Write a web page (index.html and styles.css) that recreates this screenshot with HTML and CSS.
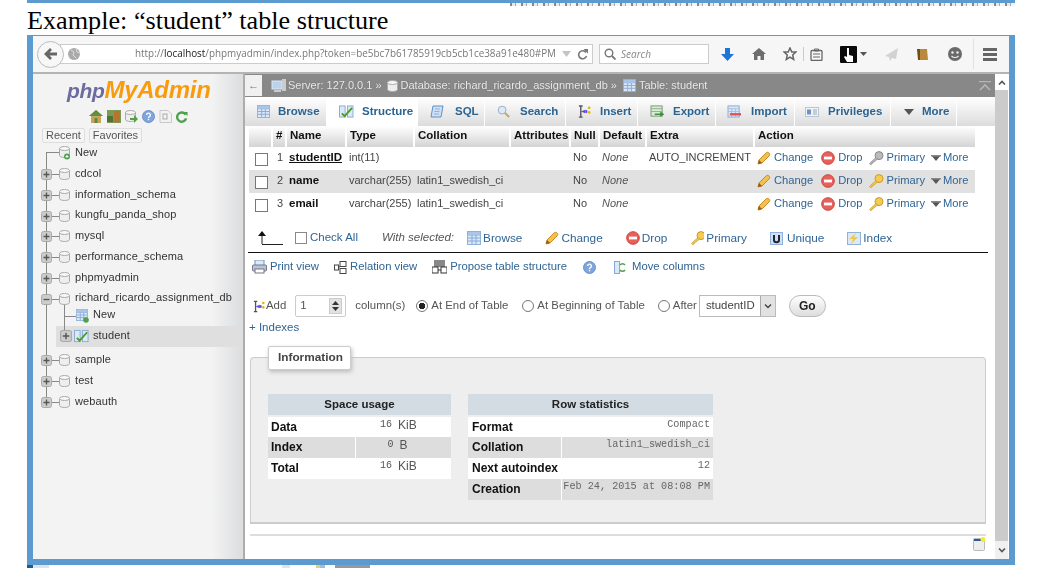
FILE: index.html
```html
<!DOCTYPE html>
<html lang="en">
<head>
<meta charset="utf-8">
<title>Example: student table structure</title>
<link rel="stylesheet" href="styles.css">
</head>
<body>
<svg class="defs" width="0" height="0" aria-hidden="true">
  <defs>
    <symbol id="pencil" viewBox="0 0 14 14"><path d="M1 13l1-4 7-7c1-1 2-1 3 0s1 2 0 3l-7 7z" fill="#f3c14d" stroke="#c98a22"/><path d="M1 13l1-4 3 3z" fill="#8a5a20"/></symbol>
    <symbol id="drop" viewBox="0 0 14 14"><circle cx="7" cy="7" r="6.3" fill="#e8605a" stroke="#c9443e"/><rect x="3" y="5.6" width="8" height="2.8" fill="#fff"/></symbol>
    <symbol id="key" viewBox="0 0 16 14"><circle cx="11" cy="4.6" r="4" fill="#f5cc52" stroke="#c99a2a"/><path d="M8 6.500L1.500 12.500l1 1 1.500-.5 .5-1.500 1.500-.5L9.500 8z" fill="#f5cc52" stroke="#c99a2a" stroke-width=".8"/></symbol>
    <symbol id="keyg" viewBox="0 0 16 14"><circle cx="11" cy="4.600" r="4" fill="#bbb" stroke="#888"/><path d="M8 6.500L1.500 12.500l1 1 1.500-.5 .5-1.500 1.500-.5L9.500 8z" fill="#bbb" stroke="#888" stroke-width=".8"/></symbol>
    <symbol id="caret" viewBox="0 0 12 8"><path d="M1 1h10L6 7z" fill="#555"/><path d="M1 1h10v1.500H1z" fill="#888"/></symbol>
    <symbol id="grid" viewBox="0 0 14 14"><rect x=".5" y=".5" width="13" height="13" fill="#dbe8f8" stroke="#8fb2dc"/><path d="M1 4h12M1 7h12M1 10h12M5 4v9M9 4v9" stroke="#86a9d6"/><rect x="1" y="1" width="12" height="3" fill="#a9c5ea"/></symbol>
    <symbol id="struct" viewBox="0 0 16 14"><rect x=".5" y="1" width="6" height="12" fill="#dbe8f8" stroke="#86a9d6"/><rect x="9" y="1" width="6" height="12" fill="#dbe8f8" stroke="#86a9d6"/><path d="M3 9l3 3 8-9" fill="none" stroke="#4c9a2a" stroke-width="2"/></symbol>
    <symbol id="sql" viewBox="0 0 14 14"><path d="M3 1h10l-2 11H1z" fill="#cfe0f5" stroke="#5f8fc8"/><path d="M5 4h5M4.500 6.500h5M4 9h5" stroke="#8fb2dc"/></symbol>
    <symbol id="lens" viewBox="0 0 14 14"><circle cx="5.500" cy="5.500" r="4.200" fill="#dceaf8" stroke="#9ab"/><path d="M8.500 8.500l4.500 4.500" stroke="#c9a36a" stroke-width="2.200"/></symbol>
    <symbol id="insert" viewBox="0 0 14 14"><path d="M1 1h4M1 13h4M3 1v12" stroke="#555" stroke-width="1.500" fill="none"/><path d="M3 7l5-2v4z" fill="#5a48d8"/><rect x="8" y="5.500" width="2" height="3" fill="#5a48d8"/><circle cx="12" cy="3" r="1.500" fill="#e5b800"/><circle cx="12" cy="8" r="1.500" fill="#e5b800"/></symbol>
    <symbol id="export" viewBox="0 0 16 14"><rect x="1" y="1" width="12" height="11" fill="#dcebd8" stroke="#6e9a6a"/><path d="M1 4h12M1 7h12" stroke="#8db08a"/><path d="M5 10h9M11 8l3 2-3 2" stroke="#3f8f3a" stroke-width="1.500" fill="none"/></symbol>
    <symbol id="import" viewBox="0 0 16 14"><rect x="1" y="1" width="12" height="12" fill="#dbe8f8" stroke="#86a9d6"/><path d="M1 4h12M1 7h12M5 4v9M9 4v9" stroke="#a4bfe2"/><path d="M3 10h12" stroke="#e05050" stroke-width="2.500"/></symbol>
    <symbol id="priv" viewBox="0 0 14 10"><rect x=".5" y=".5" width="13" height="9" fill="#f0f3f8" stroke="#b9c6d8"/><rect x="2" y="2.500" width="4" height="5" fill="#6f93c5"/><path d="M8 3h4M8 5h4M8 7h4" stroke="#9aa"/></symbol>
    <symbol id="cyl" viewBox="0 0 11 12"><path d="M.5 2.500v7c0 1 2 2 5 2s5-1 5-2v-7z" fill="#eee" stroke="#aaa"/><ellipse cx="5.500" cy="2.500" rx="5" ry="2" fill="#f8f8f8" stroke="#aaa"/></symbol>
    <symbol id="boxp" viewBox="0 0 11 11"><rect x=".5" y=".5" width="10" height="10" rx="2" fill="#ccc" stroke="#aaa"/><path d="M2.500 5.500h6M5.500 2.500v6" stroke="#555" stroke-width="1.300"/></symbol>
    <symbol id="boxm" viewBox="0 0 11 11"><rect x=".5" y=".5" width="10" height="10" rx="2" fill="#ccc" stroke="#aaa"/><path d="M2.500 5.500h6" stroke="#555" stroke-width="1.300"/></symbol>
    <symbol id="help" viewBox="0 0 13 13"><circle cx="6.500" cy="6.500" r="6" fill="#7fa5dc" stroke="#6a90c8"/><path d="M4.600 5a1.900 1.900 0 1 1 2.800 1.700c-.6.300-.9.600-.9 1.300" fill="none" stroke="#fff" stroke-width="1.400"/><rect x="5.800" y="8.800" width="1.400" height="1.400" fill="#fff"/></symbol>
    <symbol id="reload" viewBox="0 0 13 13"><path d="M10.500 4A5 5 0 1 0 11 8" fill="none" stroke="#4ea24e" stroke-width="2.600"/><path d="M8 1l4.500 0v4.500z" fill="#4ea24e"/></symbol>
  </defs>
</svg>

<div class="strip-top"></div>
<div class="strip-marks"></div>
<h1 class="doc-title">Example: “student” table structure</h1>

<div class="window">
  <header class="toolbar">
    <div class="back"><svg width="14" height="14" viewBox="0 0 14 14"><path d="M7 2L2 7l5 5M2 7h11" fill="none" stroke="#666" stroke-width="2.800"/></svg></div>
    <div class="urlbox">
      <svg class="globe" width="12" height="12" viewBox="0 0 12 12"><circle cx="6" cy="6" r="6" fill="#aaa"/><path d="M3 2l3 2-1 3 3 3M8 1l1 3 3 1" stroke="#ddd" fill="none"/></svg>
      <span class="url">http://<b>localhost</b>/phpmyadmin/index.php?token=be5bc7b61785919cb5cb1ce38a91e480#PM</span>
      <svg class="url-drop" width="9" height="6" viewBox="0 0 9 6"><path d="M0 0h9L4.500 6z" fill="#c4c4c4"/></svg>
      <svg class="url-reload" width="11" height="11" viewBox="0 0 11 11"><path d="M9 3.500A4 4 0 1 0 9.500 7" fill="none" stroke="#777" stroke-width="1.600"/><path d="M6.500 0H11v4.500z" fill="#777"/></svg>
    </div>
    <div class="searchbox">
      <svg width="12" height="12" viewBox="0 0 12 12"><circle cx="5" cy="5" r="3.800" fill="none" stroke="#777" stroke-width="1.400"/><path d="M8 8l3.500 3.500" stroke="#777" stroke-width="1.800"/></svg>
      <span>Search</span>
    </div>
    <div class="tools">
      <svg class="t-down" width="13" height="13" viewBox="0 0 13 13"><path d="M4 0h5v6h4l-6.500 7L0 6h4z" fill="#1c75d8"/></svg>
      <svg class="t-home" width="14" height="12" viewBox="0 0 14 12"><path d="M7 0L0 6h2v6h3.500V8h3v4H12V6h2z" fill="#6d6d6d"/></svg>
      <svg class="t-star" width="14" height="14" viewBox="0 0 14 14"><path d="M7 1l1.800 4h4.200l-3.300 3 1 4.500L7 10.200 3.300 12.500l1-4.500L1 5h4.200z" fill="none" stroke="#666" stroke-width="1.500"/></svg>
      <span class="t-sep"></span>
      <svg class="t-clip" width="13" height="13" viewBox="0 0 13 13"><rect x="1" y="2.500" width="11" height="10" rx="1" fill="none" stroke="#666" stroke-width="1.300"/><path d="M4.500 1h4v2h-4zM3 6h7M3 9h7" stroke="#666" fill="none"/></svg>
      <svg class="t-hand" width="17" height="17" viewBox="0 0 17 17"><rect width="17" height="17" rx="1" fill="#0a0a0a"/><path d="M7 2h2v7l4 1v6H7L4 11l1-1 2 1z" fill="#fff"/></svg>
      <svg class="t-caret" width="7" height="4" viewBox="0 0 7 4"><path d="M0 0h7L3.500 4z" fill="#555"/></svg>
      <svg class="t-plane" width="13" height="13" viewBox="0 0 13 13"><path d="M13 0L0 8l4 1 1 4 2-3 4 1z" fill="#d2d2d2"/></svg>
      <svg class="t-book" width="11" height="13" viewBox="0 0 11 13"><path d="M2 1h8l1 11H2z" fill="#b98a3a"/><path d="M0 1h3v11H1z" fill="#6e4d1e"/></svg>
      <svg class="t-smile" width="14" height="14" viewBox="0 0 14 14"><circle cx="7" cy="7" r="7" fill="#6a6a6a"/><circle cx="4.500" cy="5.500" r="1.200" fill="#eee"/><circle cx="9.500" cy="5.500" r="1.200" fill="#eee"/><path d="M3.500 9c2 2 5 2 7 0" stroke="#eee" stroke-width="1.200" fill="none"/></svg>
      <span class="t-sep t-sep-wide"></span>
      <span class="burger"><i></i><i></i><i></i></span>
    </div>
  </header>

  <div class="app">
    <aside class="sidebar">
      <div class="logo"><span class="logo-php">php</span><span class="logo-my">MyAdmin</span></div>
      <div class="quick">
        <svg width="14" height="13" viewBox="0 0 14 13"><path d="M7 0L0 6h2v7h10V6h2z" fill="#c9a35c"/><path d="M5.500 8h3v5h-3z" fill="#5d8a3a"/><path d="M7 0L0 6h14z" fill="#5f8f43"/></svg>
        <svg width="14" height="13" viewBox="0 0 14 13"><rect width="14" height="13" fill="#7c9a55"/><rect x="7" y="1" width="6" height="11" fill="#b5752c"/><rect x="0" y="6" width="6" height="6" fill="#4e7336"/></svg>
        <svg width="13" height="13" viewBox="0 0 13 13"><use href="#cyl" width="11" height="12"/><path d="M5 8h4V5l4 4-4 4v-3H5z" fill="#58a045"/></svg>
        <svg width="13" height="13"><use href="#help" width="13" height="13"/></svg>
        <svg width="13" height="13" viewBox="0 0 13 13"><path d="M1 .5h8l3.500 3.500v8.500H1z" fill="#f2f2f2" stroke="#c8c8c8"/><rect x="4" y="4" width="4" height="5" fill="none" stroke="#aaa"/></svg>
        <svg width="12" height="12"><use href="#reload" width="12" height="12"/></svg>
      </div>
      <div class="nav-tabs"><span class="nav-tab">Recent</span><span class="nav-tab">Favorites</span></div>
      <ul class="tree">
        <li class="node"><svg class="seg" viewBox="0 0 30 21"><path d="M6.500 11v12M6 10.500h13" stroke="#888" fill="none"/><use href="#cyl" x="19" y="4" width="11" height="12"/><circle cx="27" cy="14.500" r="3" fill="#4ea24e"/><path d="M25.500 14.500h3M27 13v3" stroke="#fff"/></svg><span>New</span></li>
        <li class="node"><svg class="seg" viewBox="0 0 30 21"><path d="M6.500 -2v24M12 11.500h7" stroke="#888" fill="none"/><use href="#boxp" x="1" y="6" width="11" height="11"/><use href="#cyl" x="19" y="5" width="11" height="12"/></svg><span>cdcol</span></li>
        <li class="node"><svg class="seg" viewBox="0 0 30 21"><path d="M6.500 -2v24M12 11.500h7" stroke="#888" fill="none"/><use href="#boxp" x="1" y="6" width="11" height="11"/><use href="#cyl" x="19" y="5" width="11" height="12"/></svg><span>information_schema</span></li>
        <li class="node node-s"><svg class="seg" viewBox="0 0 30 21"><path d="M6.500 -2v24M12 11.500h7" stroke="#888" fill="none"/><use href="#boxp" x="1" y="6" width="11" height="11"/><use href="#cyl" x="19" y="5" width="11" height="12"/></svg><span>kungfu_panda_shop</span></li>
        <li class="node"><svg class="seg" viewBox="0 0 30 21"><path d="M6.500 -2v24M12 11.500h7" stroke="#888" fill="none"/><use href="#boxp" x="1" y="6" width="11" height="11"/><use href="#cyl" x="19" y="5" width="11" height="12"/></svg><span>mysql</span></li>
        <li class="node"><svg class="seg" viewBox="0 0 30 21"><path d="M6.500 -2v24M12 11.500h7" stroke="#888" fill="none"/><use href="#boxp" x="1" y="6" width="11" height="11"/><use href="#cyl" x="19" y="5" width="11" height="12"/></svg><span>performance_schema</span></li>
        <li class="node"><svg class="seg" viewBox="0 0 30 21"><path d="M6.500 -2v24M12 11.500h7" stroke="#888" fill="none"/><use href="#boxp" x="1" y="6" width="11" height="11"/><use href="#cyl" x="19" y="5" width="11" height="12"/></svg><span>phpmyadmin</span></li>
        <li class="node node-s"><svg class="seg" viewBox="0 0 30 21"><path d="M6.500 -2v24M12 11.500h7M24.500 16v6" stroke="#888" fill="none"/><use href="#boxm" x="1" y="6" width="11" height="11"/><use href="#cyl" x="19" y="5" width="11" height="12"/></svg><span>richard_ricardo_assignment_db</span></li>
        <li class="node node-new"><svg class="seg-wide" viewBox="0 0 49 14"><path d="M6.500 -2v22M24.500 -2v22M24 8.500h12" stroke="#888" fill="none"/><use href="#grid" x="36" y="1" width="12" height="12"/><circle cx="46" cy="12" r="2.800" fill="#4ea24e"/></svg><span>New</span></li>
        <li class="node node-sel"><svg class="seg-wide" viewBox="0 0 49 21"><path d="M6.500 -8v32M24.500 -8v18" stroke="#888" fill="none"/><use href="#boxp" x="20" y="4" width="12" height="12"/><use href="#struct" x="34" y="3" width="15" height="14"/></svg><span class="sel-name">student</span></li>
        <li class="node node-gap"><svg class="seg" viewBox="0 0 30 21"><path d="M6.500 -5v27M12 11.500h7" stroke="#888" fill="none"/><use href="#boxp" x="1" y="6" width="11" height="11"/><use href="#cyl" x="19" y="5" width="11" height="12"/></svg><span>sample</span></li>
        <li class="node"><svg class="seg" viewBox="0 0 30 21"><path d="M6.500 -2v24M12 11.500h7" stroke="#888" fill="none"/><use href="#boxp" x="1" y="6" width="11" height="11"/><use href="#cyl" x="19" y="5" width="11" height="12"/></svg><span>test</span></li>
        <li class="node"><svg class="seg" viewBox="0 0 30 21"><path d="M6.500 -2v13M12 11.500h7" stroke="#888" fill="none"/><use href="#boxp" x="1" y="6" width="11" height="11"/><use href="#cyl" x="19" y="5" width="11" height="12"/></svg><span>webauth</span></li>
      </ul>
    </aside>

    <main class="content">
      <div class="content-main">
        <div class="crumbs">
          <span class="collapse">←</span>
          <svg class="c-server" width="15" height="13" viewBox="0 0 15 13"><rect x="1" y="2" width="10" height="8" fill="#b9d2ee" stroke="#dfe8f2"/><rect x="11" y="0" width="4" height="12" fill="#ccc"/><rect x="3" y="11" width="7" height="2" fill="#ccc"/></svg>
          <span>Server: 127.0.0.1</span><span class="c-sep">»</span>
          <svg class="c-db" width="11" height="12"><use href="#cyl" width="11" height="12"/></svg>
          <span>Database: richard_ricardo_assignment_db</span><span class="c-sep">»</span>
          <svg class="c-tb" width="13" height="13"><use href="#grid" width="13" height="13"/></svg>
          <span>Table: student</span>
          <svg class="c-top" width="12" height="10" viewBox="0 0 12 10"><path d="M0 .5h12M1 9l5-5 5 5" fill="none" stroke="#b5b5b5" stroke-width="1.600"/></svg>
        </div>

        <nav class="tabs">
          <a class="tab tab-browse"><svg width="13" height="13"><use href="#grid" width="13" height="13"/></svg>Browse</a>
          <a class="tab tab-structure active"><svg width="15" height="13"><use href="#struct" width="15" height="13"/></svg>Structure</a>
          <a class="tab tab-sql"><svg width="14" height="14"><use href="#sql" width="14" height="14"/></svg>SQL</a>
          <a class="tab tab-search"><svg width="13" height="13"><use href="#lens" width="13" height="13"/></svg>Search</a>
          <a class="tab tab-insert"><svg width="13" height="13"><use href="#insert" width="13" height="13"/></svg>Insert</a>
          <a class="tab tab-export"><svg width="15" height="13"><use href="#export" width="15" height="13"/></svg>Export</a>
          <a class="tab tab-import"><svg width="15" height="13"><use href="#import" width="15" height="13"/></svg>Import</a>
          <a class="tab tab-priv"><svg width="14" height="10"><use href="#priv" width="14" height="10"/></svg>Privileges</a>
          <a class="tab tab-more"><svg width="10" height="6" viewBox="0 0 10 6"><path d="M0 0h10L5 6z" fill="#555"/></svg>More</a>
        </nav>

        <table class="cols">
          <colgroup><col class="w23"><col class="w14"><col class="w60"><col class="w68"><col class="w96"><col class="w60"><col class="w29"><col class="w47"><col class="w108"><col class="w221"></colgroup>
          <thead><tr><th></th><th>#</th><th>Name</th><th>Type</th><th>Collation</th><th>Attributes</th><th>Null</th><th>Default</th><th>Extra</th><th>Action</th></tr></thead>
          <tbody>
            <tr>
              <td><input class="cb" type="checkbox"></td><td class="num">1</td><td class="nm"><u>studentID</u></td><td>int(11)</td><td></td><td></td><td>No</td><td class="dflt">None</td><td>AUTO_INCREMENT</td>
              <td><div class="acts"><svg width="14" height="14"><use href="#pencil" width="14" height="14"/></svg><a class="a-change">Change</a><svg width="14" height="14"><use href="#drop" width="14" height="14"/></svg><a class="a-drop">Drop</a><svg width="16" height="14"><use href="#keyg" width="16" height="14"/></svg><a class="a-primary">Primary</a><svg width="12" height="8"><use href="#caret" width="12" height="8"/></svg><a class="a-more">More</a></div></td>
            </tr>
            <tr class="alt">
              <td><input class="cb" type="checkbox"></td><td class="num">2</td><td class="nm">name</td><td>varchar(255)</td><td>latin1_swedish_ci</td><td></td><td>No</td><td class="dflt">None</td><td></td>
              <td><div class="acts"><svg width="14" height="14"><use href="#pencil" width="14" height="14"/></svg><a class="a-change">Change</a><svg width="14" height="14"><use href="#drop" width="14" height="14"/></svg><a class="a-drop">Drop</a><svg width="16" height="14"><use href="#key" width="16" height="14"/></svg><a class="a-primary">Primary</a><svg width="12" height="8"><use href="#caret" width="12" height="8"/></svg><a class="a-more">More</a></div></td>
            </tr>
            <tr>
              <td><input class="cb" type="checkbox"></td><td class="num">3</td><td class="nm">email</td><td>varchar(255)</td><td>latin1_swedish_ci</td><td></td><td>No</td><td class="dflt">None</td><td></td>
              <td><div class="acts"><svg width="14" height="14"><use href="#pencil" width="14" height="14"/></svg><a class="a-change">Change</a><svg width="14" height="14"><use href="#drop" width="14" height="14"/></svg><a class="a-drop">Drop</a><svg width="16" height="14"><use href="#key" width="16" height="14"/></svg><a class="a-primary">Primary</a><svg width="12" height="8"><use href="#caret" width="12" height="8"/></svg><a class="a-more">More</a></div></td>
            </tr>
          </tbody>
        </table>

        <div class="bulk">
          <svg class="arrow-up" width="25" height="14" viewBox="0 0 25 14"><path d="M4 13.500h21M4 13V3" stroke="#222" fill="none"/><path d="M0 5l4-5 4 5z" fill="#111"/></svg>
          <input class="cb cb-all" type="checkbox"><a class="chk">Check All</a>
          <em class="with">With selected:</em>
          <svg class="b1" width="14" height="14"><use href="#grid" width="14" height="14"/></svg><a>Browse</a>
          <svg class="b2" width="14" height="14"><use href="#pencil" width="14" height="14"/></svg><a>Change</a>
          <svg class="b2" width="14" height="14"><use href="#drop" width="14" height="14"/></svg><a>Drop</a>
          <svg class="b2" width="14" height="14"><use href="#key" width="16" height="14"/></svg><a>Primary</a>
          <svg class="b2" width="13" height="13" viewBox="0 0 13 13"><rect x=".5" y=".5" width="12" height="12" fill="#cfe0f5" stroke="#8fb2dc"/><path d="M4 3v5c0 3 5 3 5 0V3" fill="none" stroke="#223" stroke-width="2"/></svg><a class="b-unique">Unique</a>
          <svg class="b2" width="14" height="13" viewBox="0 0 14 13"><rect x=".5" y=".5" width="13" height="12" fill="#dce8f6" stroke="#8fb2dc"/><path d="M9 1L2 7h4l-2 5 7-7H7z" fill="#f0c94a"/></svg><a>Index</a>
        </div>

        <div class="links">
          <svg width="15" height="14" viewBox="0 0 15 14"><rect x="3" y="0" width="9" height="6" fill="#dfe9f7" stroke="#6f93c5"/><rect x=".5" y="5" width="14" height="6" rx="1" fill="#b6c4d8" stroke="#778"/><rect x="3" y="9" width="9" height="4" fill="#fff" stroke="#778"/></svg><a>Print view</a>
          <svg class="l2" width="13" height="13" viewBox="0 0 13 13"><rect x="6" y=".5" width="6" height="5" fill="#fff" stroke="#444"/><rect x="6" y="7.500" width="6" height="5" fill="#fff" stroke="#444"/><rect x=".5" y="4" width="4" height="5" fill="#fff" stroke="#444"/><path d="M4 6h2" stroke="#444"/></svg><a>Relation view</a>
          <svg class="l2" width="15" height="14" viewBox="0 0 15 14"><rect x="2" y="0" width="11" height="7" fill="#888"/><rect x="0" y="7" width="6" height="6" fill="#fff" stroke="#333"/><rect x="9" y="7" width="6" height="6" fill="#fff" stroke="#333"/><path d="M6 10h3" stroke="#333"/></svg><a class="l-tight">Propose table structure</a>
          <svg class="l-help" width="13" height="13"><use href="#help" width="13" height="13"/></svg>
          <svg class="l-move" width="13" height="13" viewBox="0 0 13 13"><rect x=".5" y=".5" width="5" height="12" fill="#dbe8f8" stroke="#86a9d6"/><path d="M11 4a3 3 0 0 0-5 0M6 9a3 3 0 0 0 5 0" stroke="#4ea24e" stroke-width="1.500" fill="none"/></svg><a class="l-mv">Move columns</a>
        </div>

        <form class="addrow">
          <svg class="add-ic" width="12" height="13"><use href="#insert" width="12" height="13"/></svg><span>Add</span>
          <div class="spin"><span>1</span><span class="spin-btn"><svg width="9" height="12" viewBox="0 0 9 12"><path d="M1 5l3.500-4L8 5zM1 7l3.500 4L8 7z" fill="#333"/></svg></span></div>
          <span class="m9">column(s)</span>
          <span class="radio on m11"></span><span>At End of Table</span>
          <span class="radio m14"></span><span>At Beginning of Table</span>
          <span class="radio m13"></span><span>After</span>
          <div class="select"><span>studentID</span><span class="sel-btn"><svg width="8" height="5" viewBox="0 0 8 5"><path d="M1 .5l3 3 3-3" fill="none" stroke="#444" stroke-width="1.400"/></svg></span></div>
          <button class="go" type="button">Go</button>
        </form>

        <a class="indexes">+ Indexes</a>

        <section class="panel">
          <div class="legend">Information</div>
          <div class="stats">
            <table class="st st-space">
              <colgroup><col class="w87"><col class="w96"></colgroup>
              <thead><tr><th colspan="2">Space usage</th></tr></thead>
              <tbody>
                <tr><th>Data</th><td class="val"><span class="mono">16</span><span class="unit">KiB</span></td></tr>
                <tr class="alt"><th>Index</th><td class="val val-b"><span class="mono">0</span><span class="unit">B</span></td></tr>
                <tr><th>Total</th><td class="val"><span class="mono">16</span><span class="unit">KiB</span></td></tr>
              </tbody>
            </table>
            <table class="st st-row">
              <colgroup><col class="w93"><col class="w152"></colgroup>
              <thead><tr><th colspan="2">Row statistics</th></tr></thead>
              <tbody>
                <tr><th>Format</th><td class="txt">Compact</td></tr>
                <tr class="alt"><th>Collation</th><td class="txt">latin1_swedish_ci</td></tr>
                <tr><th>Next autoindex</th><td class="txt">12</td></tr>
                <tr class="alt"><th>Creation</th><td class="txt">Feb 24, 2015 at 08:08 PM</td></tr>
              </tbody>
            </table>
          </div>
        </section>

        <footer class="foot">
          <svg width="12" height="14" viewBox="0 0 12 14"><rect x=".5" y="1.500" width="11" height="12" rx="1" fill="#eee" stroke="#bbb"/><rect x="1" y="2" width="8" height="2" fill="#2d5a9a"/><circle cx="10" cy="2.500" r="2.500" fill="#f2ee2e"/></svg>
        </footer>
      </div>
      <div class="scrollbar">
        <span class="sb-btn sb-up"><svg width="8" height="5" viewBox="0 0 8 5"><path d="M1 4.500l3-3 3 3" fill="none" stroke="#555" stroke-width="1.600"/></svg></span>
        <span class="sb-track"></span>
        <span class="sb-btn sb-down"><svg width="8" height="5" viewBox="0 0 8 5"><path d="M1 .5l3 3 3-3" fill="none" stroke="#555" stroke-width="1.600"/></svg></span>
      </div>
    </main>
  </div>
</div>
<div class="strip-bottom"></div>
</body>
</html>
```
FILE: styles.css
```css
* { box-sizing: border-box; }
html, body { margin: 0; padding: 0; }
body {
  width: 1051px;
  height: 588px;
  overflow: hidden;
  background: #fff;
  font: 11px/1.2 "Liberation Sans", Arial, sans-serif;
  color: #333;
}
.defs { display: block; height: 0; }
a { color: #2f6595; text-decoration: none; }

.strip-top { margin-left: 27px; width: 988px; height: 3px; background: #5b9bd0; }
.strip-marks {
  margin-left: 510px; width: 505px; height: 3px;
  background: repeating-linear-gradient(to right, #888 0 2px, #e8e8e8 2px 5px, #aaa 5px 6px, #f4f4f4 6px 11px);
}
.doc-title {
  margin: 0 0 0 27px; height: 29px;
  font: 400 26.2px/29px "Liberation Serif", "Times New Roman", serif; color: #000; white-space: nowrap;
}

.window {
  margin-left: 27px; width: 988px; height: 530px;
  border: solid #5b9bd0; border-width: 1px 6px 6px 6px;
  display: flex; flex-direction: column;
  filter: blur(.45px);
}
.toolbar {
  height: 38px; flex: none; display: flex; align-items: center;
  background: #f6f6f6; border-bottom: 2px solid #b4b4b4; padding-left: 4px;
}
.back {
  width: 27px; height: 27px; border-radius: 50%; flex: none;
  background: #f7f7f7; border: 1px solid #bbb;
  display: flex; align-items: center; justify-content: center; z-index: 1;
}
.urlbox {
  margin-left: -4px; width: 533px; height: 20px; background: #fff; border: 1px solid #ccc;
  display: flex; align-items: center; color: #777; font: 9.9px/1 "Open Sans", sans-serif;
}
.globe { margin-left: 7px; flex: none; }
.url { margin-left: 55px; white-space: nowrap; flex: none; }
.url b { font-weight: 400; color: #222; }
.url-drop { margin-left: auto; flex: none; }
.url-reload { margin: 0 4px 0 6px; flex: none; }
.searchbox {
  margin-left: 6px; width: 110px; height: 20px; background: #fff; border: 1px solid #ccc;
  display: flex; align-items: center; gap: 5px; padding-left: 4px;
  color: #888; font: italic 10px/1 "Open Sans", sans-serif;
}
.tools { display: flex; align-items: center; flex: none; }
.t-down { margin-left: 12px; }
.t-home { margin-left: 18px; }
.t-star { margin-left: 17px; }
.t-sep { width: 1px; height: 14px; background: #ccc; margin-left: 6px; }
.t-clip { margin-left: 6px; }
.t-hand { margin-left: 17px; }
.t-caret { margin-left: 3px; }
.t-plane { margin-left: 18px; }
.t-book { margin-left: 19px; }
.t-smile { margin-left: 20px; }
.t-sep-wide { height: 30px; margin-left: 11px; background: #e2e2e2; }
.burger { margin-left: 9px; display: flex; flex-direction: column; gap: 2px; width: 14px; }
.burger i { display: block; height: 3px; background: #666; }

.app { flex: 1; display: flex; min-height: 0; }
.sidebar {
  width: 212px; flex: none; padding-top: 3px;
  background: linear-gradient(to right, #f3f3f3 85%, #dcdee0 99%);
  border-right: 2px solid #adadad;
}
.logo {
  height: 28px; padding-left: 34px; white-space: nowrap;
  font: italic 700 24px/26px "Liberation Sans", sans-serif; letter-spacing: -.3px;
}
.logo-php { color: #6c6ca0; font-size: 21px; }
.logo-my { color: #f89c0e; }
.quick { height: 19px; padding-left: 56px; display: flex; align-items: center; gap: 4px; margin-top: 2px; }
.nav-tabs { padding-left: 9px; margin-top: 2px; display: flex; gap: 4px; height: 14px; }
.nav-tab {
  padding: 0 3px; height: 15px; border: 1px solid #ddd; border-radius: 2px; background: #f5f5f5;
  line-height: 13px; color: #555; font-size: 11px;
}
.tree { list-style: none; margin: 0; padding: 0 0 0 7px; }
.node { height: 21px; display: flex; align-items: center; gap: 5px; color: #333; white-space: nowrap; font-size: 11px; letter-spacing: .1px; }
.node-s { height: 20px; }
.node-new { height: 14px; gap: 4px; }
.node-sel {
  height: 21px; gap: 4px; margin-top: 4px;
  background: linear-gradient(to right, transparent 16px, #dfdfdf 16px, #dfdfdf 100%);
}
.sel-name { margin-bottom: 1px; }
.node-gap { margin-top: 2px; }
.seg { width: 30px; height: 21px; flex: none; overflow: visible; }
.seg-wide { width: 49px; flex: none; overflow: visible; height: 100%; }

.content { flex: 1; display: flex; min-width: 0; background: #fff; }
.content-main { flex: 1; min-width: 0; }
.crumbs {
  height: 23px; background: #888; color: #eaeaea; display: flex; align-items: center;
  font-size: 11px; text-shadow: 0 0 1px #666; white-space: nowrap;
}
.collapse {
  width: 17px; height: 21px; background: #f0f0f0; color: #777; text-align: center; line-height: 20px;
  margin-right: 9px; font-size: 11px; text-shadow: none;
}
.c-server { margin-right: 2px; }
.c-sep { margin: 0 3px; }
.c-db { margin: 0 3px 0 2px; }
.c-tb { margin: 0 3px 0 3px; }
.c-top { margin-left: auto; margin-right: 4px; }

.tabs {
  height: 29px; display: flex;
  background: linear-gradient(#fff, #dcdcdc);
}
.tab {
  display: flex; align-items: center; font-weight: 700; font-size: 11.5px; color: #2c6491;
  border-right: 1px solid #fff; white-space: nowrap; height: 29px;
  background: linear-gradient(#fff, #dcdcdc);
}
.tab.active { background: #fff; }
.tab svg { flex: none; }
.tab-browse { width: 82px; padding-left: 12px; gap: 8px; border-top-right-radius: 3px; }
.tab-structure { width: 91px; padding-left: 12px; gap: 8px; }
.tab-sql { width: 67px; padding-left: 12px; gap: 11px; }
.tab-search { width: 81px; padding-left: 12px; gap: 10px; }
.tab-insert { width: 72px; padding-left: 12px; gap: 9px; }
.tab-export { width: 78px; padding-left: 12px; gap: 8px; }
.tab-import { width: 79px; padding-left: 11px; gap: 9px; }
.tab-priv { width: 96px; padding-left: 10px; gap: 9px; }
.tab-more { width: 66px; padding-left: 13px; gap: 8px; }

.cols { width: 726px; margin-left: 4px; table-layout: fixed; border-collapse: collapse; }
.w23 { width: 23px; } .w14 { width: 14px; } .w60 { width: 60px; } .w68 { width: 68px; }
.w96 { width: 96px; } .w29 { width: 29px; } .w47 { width: 47px; } .w108 { width: 108px; } .w221 { width: 221px; }
.w87 { width: 87px; } .w93 { width: 93px; } .w152 { width: 152px; }
.cols th {
  height: 21px; padding: 0 0 2px 3px; text-align: left; font-size: 11.5px; font-weight: 700; color: #111;
  background: linear-gradient(#fff, #d4d4d4); border-right: 2px solid #fff; white-space: nowrap;
}
.cols th:last-child { border-right: 0; }
.cols td { height: 23px; padding: 0 0 2px 3px; font-size: 11px; color: #444; white-space: nowrap; overflow: hidden; }
.cols .alt td { background: #e1e1e1; }
.cb {
  appearance: none; display: block; width: 13px; height: 13px; margin: 3px 0 0 3px;
  background: #fff; border: 1px solid #777;
}
.cols .num { text-align: right; padding-right: 3px; }
.cols .nm { font-weight: 700; font-size: 11.5px; color: #111; }
.cols .dflt { font-style: italic; color: #555; }
.acts { display: flex; align-items: center; font-size: 11.2px; }
.acts svg { flex: none; }
.acts a { margin-left: 3px; }
.acts .a-primary { margin-left: 2px; margin-right: 5px; }
.acts .a-change { margin-right: 8px; }
.acts .a-drop { margin-right: 6px; }
.acts .a-more { margin-left: 1px; }

.bulk {
  margin: 10px 0 0 3px; height: 27px; width: 740px; padding: 0 0 2px 10px;
  border-bottom: 1px solid #111; display: flex; align-items: center; font-size: 11.8px;
}
.bulk svg { flex: none; }
.bulk a { margin-left: 2px; }
.arrow-up { margin-right: 12px; }
.cb-all { margin: 0; width: 12px; height: 12px; border-color: #888; }
.with { margin-left: 24px; margin-right: 13px; color: #555; font-size: 11.5px; }
.bulk a.chk { margin-left: 3px; font-size: 11.5px; }
.bulk a.b-unique { margin-left: 4px; }
.b2 { margin-left: 23px; }

.links { height: 25px; padding: 3px 0 0 7px; display: flex; align-items: center; font-size: 11.3px; }
.links a { margin-left: 3px; }
.links svg { flex: none; }
.l2 { margin-left: 15px; }
.links a.l-tight { margin-left: 3px; }
.l-help { margin-left: 16px; }
.l-move { margin-left: 18px; }
.links a.l-mv { margin-left: 5px; }

.addrow {
  margin-top: 17px; height: 22px; padding-left: 8px; display: flex; align-items: center; color: #555; font-size: 11.4px;
}
.add-ic { margin-right: 1px; }
.spin {
  margin-left: 9px; width: 51px; height: 22px; border: 1px solid #ccc; border-radius: 2px; background: #fff;
  display: flex; align-items: center; justify-content: space-between; padding: 0 3px 0 4px;
}
.spin-btn { width: 13px; height: 16px; background: #e2e2e2; border: 1px solid #ccc; display: flex; align-items: center; justify-content: center; }
.m9 { margin-left: 9px; }
.radio { width: 12px; height: 12px; border-radius: 50%; border: 1px solid #777; background: #fff; margin-right: 3px; flex: none; }
.radio.on { background: radial-gradient(circle, #222 0 3px, #fff 3.5px); }
.m11 { margin-left: 11px; }
.m14 { margin-left: 14px; }
.m13 { margin-left: 13px; }
.select {
  margin-left: 2px; width: 77px; height: 22px; border: 1px solid #bbb; background: #fff; display: flex; align-items: center;
  justify-content: space-between; padding-left: 6px; color: #444;
}
.sel-btn { width: 15px; height: 20px; background: #e2e2e2; border-left: 1px solid #aaa; display: flex; align-items: center; justify-content: center; }
.go {
  margin-left: 13px; width: 37px; height: 22px; border: 1px solid #bbb; border-radius: 11px;
  background: linear-gradient(#fff, #ddd); font: 700 12px/1 "Liberation Sans", sans-serif; color: #222; padding: 0;
}
.indexes { display: block; height: 20px; padding: 4px 0 0 4px; font-size: 11.5px; }

.panel {
  margin: 20px 0 0 5px; width: 736px; height: 167px; background: #eee; border: 1px solid #ccc; border-bottom-width: 2px;
  border-radius: 4px 4px 0 0; padding-left: 17px;
}
.legend {
  width: 83px; height: 24px; margin-top: -12px; background: #fff; border: 1px solid #ccc; border-radius: 2px;
  box-shadow: 1px 2px 4px #bbb; font-weight: 700; font-size: 11.8px; line-height: 21px; padding-left: 9px; color: #444;
}
.stats { display: flex; gap: 17px; margin-top: 24px; align-items: flex-start; }
.st { border-collapse: collapse; table-layout: fixed; }
.st-space { width: 183px; }
.st-row { width: 245px; }
.st thead th { height: 22px; padding-top: 1px; background: #d3dce3; background-clip: padding-box; text-align: center; font-size: 11.5px; font-weight: 700; color: #222; border-bottom: 2px solid #eee; }
.st tbody tr { background: #fff; }
.st tbody tr.alt { background: #ddd; }
.st tbody th { height: 21px; text-align: left; padding-left: 3px; font-size: 12px; color: #111; font-weight: 700; white-space: nowrap; }
.st-row tbody th { padding-left: 4px; }
.st tbody td { padding: 0 3px 4px 0; }
.st .alt th { border-right: 1px solid #fff; }
.st tbody .val { text-align: left; padding-left: 25px; white-space: nowrap; color: #555; }
.st tbody .val-b { padding-left: 32px; }
.mono { font: 10px/1 "Liberation Mono", monospace; vertical-align: 2px; color: #555; }
.unit { margin-left: 6px; font-size: 12px; color: #555; }
.txt { text-align: right; font: 10.2px/1 "Liberation Mono", monospace; color: #666; white-space: nowrap; }

.foot { margin: 10px 0 0 5px; width: 736px; height: 20px; border-top: 2px solid #ddd; display: flex; justify-content: flex-end; padding: 1px 1px 0 0; }

.scrollbar { width: 14px; flex: none; display: flex; flex-direction: column; background: #fff; border-right: 1px solid #fff; }
.sb-btn { display: flex; align-items: center; justify-content: center; background: #f0f0f0; }
.sb-up { height: 16px; background: #fff; }
.sb-down { height: 18px; }
.sb-track { flex: 1; background: #cbcbcb; }

.strip-bottom {
  margin-left: 27px; width: 988px; height: 3px;
  background: linear-gradient(to right, #1f5a8f 0 6px, #dfe3e6 6px 22px, #fff 22px 255px, #e4e4e4 255px 263px, #fff 263px 289px, #e8cf70 289px 293px, #9fbfe0 293px 298px, #fff 298px 308px, #999 308px 343px, #fff 343px);
}
```
